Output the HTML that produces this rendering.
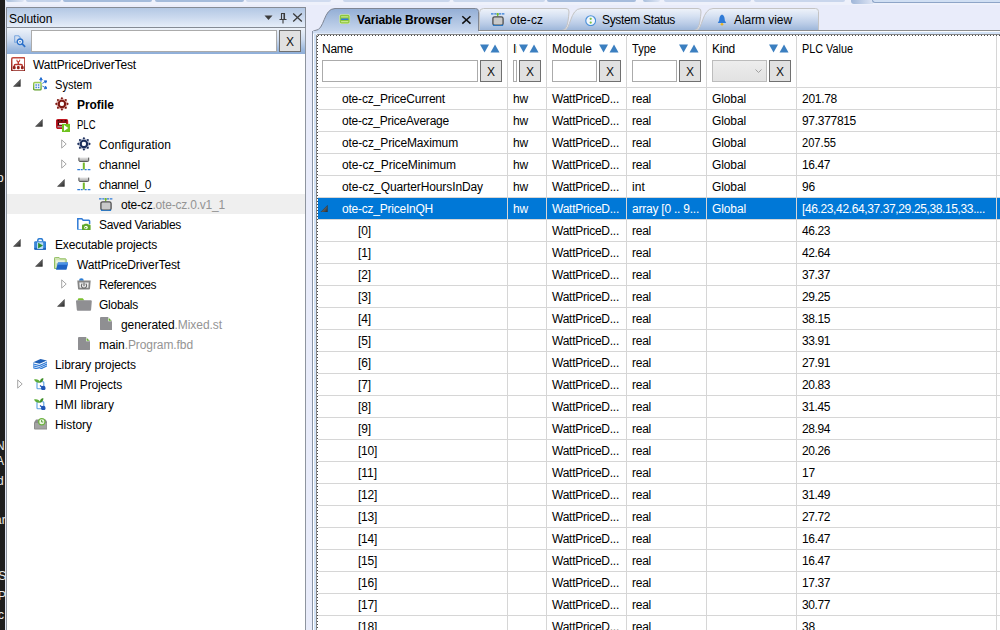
<!DOCTYPE html>
<html><head><meta charset="utf-8"><title>Variable Browser</title>
<style>
html,body{margin:0;padding:0;}
body{width:1000px;height:630px;overflow:hidden;position:relative;background:#e9ecfa;font-family:"Liberation Sans",sans-serif;font-size:12px;color:#111;}
.a{position:absolute;}
.t{position:absolute;white-space:nowrap;line-height:16px;height:16px;color:#000;}
.ic{position:absolute;display:block;line-height:0;font-style:normal;}
.b{font-weight:bold;}
.g{color:#949494;}
.w{color:#fff;}
.xb{position:absolute;box-sizing:border-box;border:1px solid #707070;background:#e1e1e1;text-align:center;font-size:12px;line-height:22px;color:#111;}
.inp{position:absolute;box-sizing:border-box;border:1px solid #ababab;background:#fff;}
.hl{position:absolute;height:1px;background:#d6d6d6;left:318px;width:682px;}
.vl{position:absolute;width:1px;background:#d6d6d6;top:36px;height:594px;}
</style></head><body>

<div class="a" style="left:0;top:0;width:1000px;height:5px;background:#eef1fb"></div>
<div class="a" style="left:6px;top:0;width:18px;height:2px;background:linear-gradient(90deg,#a9bfdc,#dfe6f5);border-radius:0 0 2px 2px"></div>
<div class="a" style="left:26px;top:0;width:35px;height:2px;background:#c3d2ea;border-radius:0 0 2px 2px"></div>
<div class="a" style="left:63px;top:0;width:89px;height:2px;background:#a4bbdb;border-radius:0 0 2px 2px"></div>
<div class="a" style="left:155px;top:0;width:89px;height:2px;background:#a4bbdb;border-radius:0 0 2px 2px"></div>
<div class="a" style="left:246px;top:0;width:85px;height:2px;background:#d0dbef;border-radius:0 0 2px 2px"></div>
<div class="a" style="left:343px;top:0;width:107px;height:2px;background:#c9d6ec;border-radius:0 0 2px 2px"></div>
<div class="a" style="left:453px;top:0;width:92px;height:2px;background:#cbd8ed;border-radius:0 0 2px 2px"></div>
<div class="a" style="left:547px;top:0;width:89px;height:2px;background:#a6bcdc;border-radius:0 0 2px 2px"></div>
<div class="a" style="left:643px;top:0;width:17px;height:2px;background:linear-gradient(90deg,#a9bfdc,#dfe6f5);border-radius:0 0 2px 2px"></div>
<div class="a" style="left:664px;top:0;width:87px;height:2px;background:#c9d6ec;border-radius:0 0 2px 2px"></div>
<div class="a" style="left:754px;top:0;width:91px;height:2px;background:#c9d6ec;border-radius:0 0 2px 2px"></div>
<div class="a" style="left:851px;top:0;width:22px;height:4px;background:linear-gradient(90deg,#9fb6d8,#dfe6f5);border-radius:0 0 0 3px"></div>
<div class="a" style="left:872px;top:0;width:128px;height:2px;background:#d0dff3;border-bottom:1px solid #8ea5c7;border-left:1px solid #8ea5c7;border-radius:0 0 0 3px"></div>
<div class="a" style="left:0;top:0;width:5px;height:630px;background:#1e1e1e;overflow:hidden">
<span class="t" style="left:-4px;top:438px;color:#e8e8e8">N</span>
<span class="t" style="left:-4px;top:453px;color:#e8e8e8">A</span>
<span class="t" style="left:-3px;top:473px;color:#e8e8e8">d</span>
<span class="t" style="left:-5px;top:512px;color:#e8e8e8">ar</span>
<span class="t" style="left:-5px;top:568px;color:#e8e8e8">IS</span>
<span class="t" style="left:-2px;top:588px;color:#e8e8e8">P</span>
<span class="t" style="left:-2px;top:607px;color:#e8e8e8">c</span>
<span class="t" style="left:-3px;top:170px;color:#e8e8e8">o</span>
</div>
<div class="a" style="left:5px;top:0;width:1px;height:630px;background:#e0e5f4"></div>
<div class="a" style="left:6px;top:7px;width:300px;height:623px;background:#fff;border-left:1px solid #8e959f;border-right:1px solid #8e959f;box-sizing:border-box"></div>
<div class="a" style="left:6px;top:7px;width:300px;height:21px;box-sizing:border-box;border:1px solid #858b95;background:linear-gradient(#b3c8e4,#cbd9ee 50%,#e6eef9)"></div>
<span class="t " id="t1" style="left:9px;top:11px;letter-spacing:0.016px;">Solution</span>
<i class="ic" style="left:264px;top:15px"><svg width="9" height="6" viewBox="0 0 9 6"><path d="M0.500 0.500h8L4.500 5z" fill="#3b3b3b"/></svg></i>
<i class="ic" style="left:279px;top:13px"><svg width="8" height="11" viewBox="0 0 8 11"><path d="M2 0.500h4M2.500 0.500v5.500M5.500 0.500v5.500M0.500 6.500h7M4 6.500v4" fill="none" stroke="#3b3b3b" stroke-width="1.100"/><path d="M4.500 0.500h1.500v6h-1.500z" fill="#3b3b3b"/></svg></i>
<i class="ic" style="left:292px;top:13px"><svg width="11" height="10" viewBox="0 0 11 10"><path d="M1.200 0.600l8.600 8M9.800 0.600l-8.600 8" stroke="#3b3b3b" stroke-width="1.300"/></svg></i>
<div class="a" style="left:7px;top:28px;width:298px;height:26px;background:linear-gradient(#eef3fa,#cddbef 45%,#9db9de 82%,#8eaed8)"></div>
<i class="ic" style="left:13.5px;top:35px"><svg width="12" height="12.8" viewBox="0 0 14 15" preserveAspectRatio="none"><path d="M0.800 1h4.500l2 2v3" fill="none" stroke="#7aa7de" stroke-width="1.200"/><path d="M0.800 1v7.500h2" fill="none" stroke="#7aa7de" stroke-width="1.200"/><circle cx="7" cy="8" r="3.300" fill="#eaf2fb" stroke="#2a6fc9" stroke-width="1.600"/><path d="M5.800 8h2.400" stroke="#2a6fc9" stroke-width="1"/><path d="M9.500 10.500l3.500 3.500" stroke="#2a6fc9" stroke-width="2"/></svg></i>
<div class="inp" style="left:31px;top:30px;width:246px;height:22px"></div>
<div class="xb" style="left:279px;top:30px;width:22px;height:22px">X</div>
<div class="a" style="left:7px;top:194px;width:298px;height:20px;background:#efefef"></div>
<i class="ic" style="left:10.6px;top:56.5px"><svg width="14.6" height="14.6" viewBox="0 0 15 15" preserveAspectRatio="none"><defs><linearGradient id="rg2" x1="0" y1="0" x2="0" y2="1"><stop offset="0" stop-color="#c24a3e"/><stop offset="1" stop-color="#8a1a13"/></linearGradient></defs><rect x="0.750" y="0.750" width="13.500" height="13.500" rx="1.200" fill="#fff" stroke="url(#rg2)" stroke-width="1.500"/><path d="M6.100 2.700v0.900a1.400 1.400 0 0 0 2.800 0v-0.900" fill="none" stroke="#c9453a" stroke-width="1.100"/><path d="M7.500 5v3.600M3.300 10.200V9.200a1.500 1.500 0 0 1 1.500 -1.500h5.400a1.500 1.500 0 0 1 1.500 1.500V10.200" fill="none" stroke="#b7342b" stroke-width="1.400"/><rect x="1.900" y="9.300" width="2.900" height="3.200" rx="1.200" fill="#96211a"/><rect x="6.050" y="9.300" width="2.900" height="3.200" rx="1.200" fill="#96211a"/><rect x="10.200" y="9.300" width="2.900" height="3.200" rx="1.200" fill="#96211a"/></svg></i>
<span class="t " id="t2" style="left:33px;top:57px;letter-spacing:-0.136px;">WattPriceDriverTest</span>
<i class="ic" style="left:13.3px;top:79.2px"><svg width="7.600" height="7.600" viewBox="0 0 7.600 7.600"><defs><linearGradient id="ag14_84" x1="0" y1="0" x2="1" y2="1"><stop offset="0.400" stop-color="#6a6a6a"/><stop offset="1" stop-color="#2a2a2a"/></linearGradient></defs><path d="M7.400 0.500V7.400H0.500z" fill="url(#ag14_84)" stroke="#2e2e2e" stroke-width="0.500"/></svg></i>
<i class="ic" style="left:32.7px;top:77px"><svg width="14.6" height="13.6" viewBox="0 0 15 14" preserveAspectRatio="none"><defs><linearGradient id="gg3" x1="0" y1="0" x2="0" y2="1"><stop offset="0" stop-color="#9ccc55"/><stop offset="1" stop-color="#5e9d28"/></linearGradient></defs><rect x="0.700" y="5.700" width="7.600" height="7.600" rx="1" fill="#f4f8ff" stroke="url(#gg3)" stroke-width="1.400"/><rect x="2.500" y="7.500" width="1.500" height="1.500" fill="#3f7fd6"/><rect x="5" y="7.500" width="1.500" height="1.500" fill="#3f7fd6"/><rect x="2.500" y="10" width="1.500" height="1.500" fill="#3f7fd6"/><rect x="5" y="10" width="1.500" height="1.500" fill="#3f7fd6"/><path d="M8.200 5V2.800M6.900 2.800L8.200 0.600L9.500 2.800z" stroke="#1f6ad0" stroke-width="1" fill="#1f6ad0"/><path d="M9.600 6.600L12.300 5M11.600 3.900L14.300 4L13 6.300z" stroke="#1f6ad0" stroke-width="0.900" fill="#1f6ad0"/><path d="M9.600 9.300L12.300 10.700M13 9.500L14.300 11.800L11.700 12.200z" stroke="#1f6ad0" stroke-width="0.900" fill="#1f6ad0"/></svg></i>
<span class="t " id="t3" style="left:55px;top:77px;transform:scaleX(0.9246);transform-origin:0 0;">System</span>
<i class="ic" style="left:55px;top:96.9px"><svg width="13.8" height="13.8" viewBox="0 0 14 14" preserveAspectRatio="none"><circle cx="7" cy="7" r="5.800" fill="#e0b4af"/><circle cx="7" cy="7" r="3.200" fill="none" stroke="#7e1a14" stroke-width="2.200"/><circle cx="7" cy="7" r="2.100" fill="#fff"/><circle cx="12.70" cy="7.00" r="1.050" fill="#7e1a14"/><circle cx="11.03" cy="11.03" r="1.050" fill="#7e1a14"/><circle cx="7.00" cy="12.70" r="1.050" fill="#7e1a14"/><circle cx="2.97" cy="11.03" r="1.050" fill="#7e1a14"/><circle cx="1.30" cy="7.00" r="1.050" fill="#7e1a14"/><circle cx="2.97" cy="2.97" r="1.050" fill="#7e1a14"/><circle cx="7.00" cy="1.30" r="1.050" fill="#7e1a14"/><circle cx="11.03" cy="2.97" r="1.050" fill="#7e1a14"/></svg></i>
<span class="t b" id="t4" style="left:77px;top:97px;letter-spacing:-0.049px;">Profile</span>
<i class="ic" style="left:35.3px;top:119.2px"><svg width="7.600" height="7.600" viewBox="0 0 7.600 7.600"><defs><linearGradient id="ag36_124" x1="0" y1="0" x2="1" y2="1"><stop offset="0.400" stop-color="#6a6a6a"/><stop offset="1" stop-color="#2a2a2a"/></linearGradient></defs><path d="M7.400 0.500V7.400H0.500z" fill="url(#ag36_124)" stroke="#2e2e2e" stroke-width="0.500"/></svg></i>
<i class="ic" style="left:56px;top:119.2px"><svg width="14.2" height="13" viewBox="0 0 14.2 13" preserveAspectRatio="none"><rect x="0.700" y="0.700" width="10.800" height="8.600" rx="1.200" fill="#8a1016" stroke="#bf1620" stroke-width="1.400"/><path d="M1.500 1.700h1.800M4.600 1.700h2M8.600 1.700h2" stroke="#1a0204" stroke-width="1"/><rect x="2" y="3.600" width="1.200" height="2.200" fill="#1a0204"/><rect x="3.100" y="4" width="7" height="1.700" fill="#fff"/><rect x="1.500" y="7.300" width="4.600" height="1" fill="#b9c3d0"/><rect x="6" y="4.900" width="8.200" height="8.100" fill="#6fc21f"/><path d="M8 6.100L12.300 9L8 11.900z" fill="#fff"/></svg></i>
<span class="t " id="t5" style="left:77px;top:117px;transform:scaleX(0.7925);transform-origin:0 0;">PLC</span>
<i class="ic" style="left:60.7px;top:138.7px"><svg width="6" height="10" viewBox="0 0 6 10"><path d="M0.700 0.900L5.200 5L0.700 9.100z" fill="#fff" stroke="#a6a6a6" stroke-width="1"/></svg></i>
<i class="ic" style="left:77px;top:136.9px"><svg width="13.8" height="13.8" viewBox="0 0 14 14" preserveAspectRatio="none"><circle cx="7" cy="7" r="5.800" fill="#b9c0d2"/><circle cx="7" cy="7" r="3.200" fill="none" stroke="#1c2f5c" stroke-width="2.200"/><circle cx="7" cy="7" r="2.100" fill="#fff"/><circle cx="12.70" cy="7.00" r="1.050" fill="#1c2f5c"/><circle cx="11.03" cy="11.03" r="1.050" fill="#1c2f5c"/><circle cx="7.00" cy="12.70" r="1.050" fill="#1c2f5c"/><circle cx="2.97" cy="11.03" r="1.050" fill="#1c2f5c"/><circle cx="1.30" cy="7.00" r="1.050" fill="#1c2f5c"/><circle cx="2.97" cy="2.97" r="1.050" fill="#1c2f5c"/><circle cx="7.00" cy="1.30" r="1.050" fill="#1c2f5c"/><circle cx="11.03" cy="2.97" r="1.050" fill="#1c2f5c"/></svg></i>
<span class="t " id="t6" style="left:99px;top:137px;letter-spacing:0.047px;">Configuration</span>
<i class="ic" style="left:60.7px;top:158.7px"><svg width="6" height="10" viewBox="0 0 6 10"><path d="M0.700 0.900L5.200 5L0.700 9.100z" fill="#fff" stroke="#a6a6a6" stroke-width="1"/></svg></i>
<i class="ic" style="left:77.2px;top:157.2px"><svg width="13.6" height="13.4" viewBox="0 0 13.6 13.4" preserveAspectRatio="none"><defs><linearGradient id="cg7" x1="0" y1="0" x2="0" y2="1"><stop offset="0" stop-color="#e6e6e6"/><stop offset="1" stop-color="#a6a6a6"/></linearGradient></defs><rect x="1.900" y="0.400" width="9.800" height="4" rx="0.900" fill="url(#cg7)"/><path d="M1.900 0.600V3.500a0.900 0.900 0 0 0 0.900 0.900h8a0.900 0.900 0 0 0 0.900 -0.900V0.600" fill="none" stroke="#4d4d4d" stroke-width="1"/><path d="M6.800 5.600v7" stroke="#76b82a" stroke-width="2"/><path d="M0.300 12.700h2.700M3.700 12.700h2M7.700 12.700h2M10.700 12.700h2.700" stroke="#2f7ad6" stroke-width="1.300"/></svg></i>
<span class="t " id="t7" style="left:99px;top:157px;letter-spacing:-0.150px;">channel</span>
<i class="ic" style="left:57.3px;top:179.2px"><svg width="7.600" height="7.600" viewBox="0 0 7.600 7.600"><defs><linearGradient id="ag58_184" x1="0" y1="0" x2="1" y2="1"><stop offset="0.400" stop-color="#6a6a6a"/><stop offset="1" stop-color="#2a2a2a"/></linearGradient></defs><path d="M7.400 0.500V7.400H0.500z" fill="url(#ag58_184)" stroke="#2e2e2e" stroke-width="0.500"/></svg></i>
<i class="ic" style="left:77.2px;top:177.2px"><svg width="13.6" height="13.4" viewBox="0 0 13.6 13.4" preserveAspectRatio="none"><defs><linearGradient id="cg8" x1="0" y1="0" x2="0" y2="1"><stop offset="0" stop-color="#e6e6e6"/><stop offset="1" stop-color="#a6a6a6"/></linearGradient></defs><rect x="1.900" y="0.400" width="9.800" height="4" rx="0.900" fill="url(#cg8)"/><path d="M1.900 0.600V3.500a0.900 0.900 0 0 0 0.900 0.900h8a0.900 0.900 0 0 0 0.900 -0.900V0.600" fill="none" stroke="#4d4d4d" stroke-width="1"/><path d="M6.800 5.600v7" stroke="#76b82a" stroke-width="2"/><path d="M0.300 12.700h2.700M3.700 12.700h2M7.700 12.700h2M10.700 12.700h2.700" stroke="#2f7ad6" stroke-width="1.300"/></svg></i>
<span class="t " id="t8" style="left:99px;top:177px;letter-spacing:-0.377px;">channel_0</span>
<i class="ic" style="left:99.3px;top:197.5px"><svg width="13.4" height="13.2" viewBox="0 0 13.4 13.2" preserveAspectRatio="none"><path d="M0 0.900h2.600M3.300 0.900h2.200M8 0.900h2.200M10.900 0.900h2.500" stroke="#2f7ad6" stroke-width="1.200"/><circle cx="6.700" cy="1.100" r="1.200" fill="#76b82a"/><path d="M6.700 1.500v2" stroke="#76b82a" stroke-width="1.200"/><rect x="1.900" y="3.800" width="10.200" height="8.400" rx="1.800" fill="#c9c9c9" stroke="#505050" stroke-width="1.300"/><path d="M2.300 11.600Q2.600 12.800 4 12.800H10Q11.400 12.800 11.700 11.600" fill="none" stroke="#1e78d0" stroke-width="1.300"/></svg></i>
<span class="t " id="t9" style="left:121px;top:197px;letter-spacing:-0.203px;">ote-cz<span class="g">.ote-cz.0.v1_1</span></span>
<i class="ic" style="left:77.4px;top:217.6px"><svg width="13.6" height="12.6" viewBox="0 0 13.6 12.6" preserveAspectRatio="none"><path d="M0.800 11V0.800H4.800l1.400 1.500H11.800a0.800 0.800 0 0 1 0.800 0.800V6" fill="none" stroke="#2f7ad6" stroke-width="1.500"/><path d="M0.800 11a1 1 0 0 0 1 1H5" fill="none" stroke="#5aa0e6" stroke-width="1.500"/><path d="M5 7.600a1 1 0 0 1 1 -1h1l0.800 -0.900h2.600l0.800 0.900h1.400a1 1 0 0 1 1 1v4a1 1 0 0 1 -1 1h-6.600a1 1 0 0 1 -1 -1z" fill="#5fa82a"/><circle cx="9" cy="9.500" r="1.800" fill="#fff"/><circle cx="8.700" cy="9.700" r="0.800" fill="#5fa82a"/></svg></i>
<span class="t " id="t10" style="left:99px;top:217px;letter-spacing:-0.300px;">Saved Variables</span>
<i class="ic" style="left:13.3px;top:239.2px"><svg width="7.600" height="7.600" viewBox="0 0 7.600 7.600"><defs><linearGradient id="ag14_244" x1="0" y1="0" x2="1" y2="1"><stop offset="0.400" stop-color="#6a6a6a"/><stop offset="1" stop-color="#2a2a2a"/></linearGradient></defs><path d="M7.400 0.500V7.400H0.500z" fill="url(#ag14_244)" stroke="#2e2e2e" stroke-width="0.500"/></svg></i>
<i class="ic" style="left:33.8px;top:237.7px"><svg width="12.4" height="12" viewBox="0 0 12.4 12" preserveAspectRatio="none"><path d="M3.800 3.600V2.300a1.600 1.600 0 0 1 1.600 -1.600h1.600a1.600 1.600 0 0 1 1.600 1.600V3.600" fill="none" stroke="#2b7cd3" stroke-width="1.500"/><rect x="0.200" y="3.300" width="12" height="8.500" rx="1.200" fill="#2b7cd3"/><rect x="0.200" y="9.800" width="12" height="2" rx="1" fill="#1c62b8"/><rect x="2.900" y="4.300" width="6.400" height="6.600" rx="0.800" fill="#b9dcf7"/><path d="M4.100 4.700v5.800l4.900-2.900z" fill="#2d8f2d"/><path d="M1.500 4.500v6M10.800 4.500v6" stroke="#5aa0e6" stroke-width="0.700" stroke-dasharray="1 1"/></svg></i>
<span class="t " id="t11" style="left:55px;top:237px;letter-spacing:-0.144px;">Executable projects</span>
<i class="ic" style="left:35.3px;top:259.2px"><svg width="7.600" height="7.600" viewBox="0 0 7.600 7.600"><defs><linearGradient id="ag36_264" x1="0" y1="0" x2="1" y2="1"><stop offset="0.400" stop-color="#6a6a6a"/><stop offset="1" stop-color="#2a2a2a"/></linearGradient></defs><path d="M7.400 0.500V7.400H0.500z" fill="url(#ag36_264)" stroke="#2e2e2e" stroke-width="0.500"/></svg></i>
<i class="ic" style="left:54px;top:257px"><svg width="14.4" height="12.8" viewBox="0 0 14.4 12.8" preserveAspectRatio="none"><path d="M0.500 11.500V1.200a0.800 0.800 0 0 1 0.800 -0.800h3.700l1.200 1.400h5.200a0.800 0.800 0 0 1 0.800 0.800V11.500z" fill="#cfe3b3" stroke="#86b850" stroke-width="0.900"/><path d="M2 3.300h8.600v3H2z" fill="#e8f2dc"/><path d="M4 5.500h10.400l-2 7.300h-10.400z" fill="#1f63c4"/><path d="M4 5.500h10.400l-0.600 2.200h-10.400z" fill="#4f94e6"/></svg></i>
<span class="t " id="t12" style="left:77px;top:257px;letter-spacing:-0.136px;">WattPriceDriverTest</span>
<i class="ic" style="left:60.7px;top:278.7px"><svg width="6" height="10" viewBox="0 0 6 10"><path d="M0.700 0.900L5.200 5L0.700 9.100z" fill="#fff" stroke="#a6a6a6" stroke-width="1"/></svg></i>
<i class="ic" style="left:77px;top:278px"><svg width="14" height="11.6" viewBox="0 0 14 11.6" preserveAspectRatio="none"><path d="M2 2.700a2.400 2.400 0 0 1 4.800 0z" fill="#2b7cd3"/><path d="M0.300 2.600h13.400l-0.700 8a1 1 0 0 1 -1 1h-10a1 1 0 0 1 -1 -1z" fill="#858585"/><path d="M2.300 4.500h9.400l-0.400 5.300h-8.600z" fill="#efefef"/><path d="M5.300 5.600a2.600 2.600 0 1 0 3.400 0" fill="none" stroke="#6b6b6b" stroke-width="1.100"/><path d="M7 4.600v3.600" stroke="#6b6b6b" stroke-width="1.200"/></svg></i>
<span class="t " id="t13" style="left:99px;top:277px;letter-spacing:-0.438px;">References</span>
<i class="ic" style="left:57.3px;top:299.2px"><svg width="7.600" height="7.600" viewBox="0 0 7.600 7.600"><defs><linearGradient id="ag58_304" x1="0" y1="0" x2="1" y2="1"><stop offset="0.400" stop-color="#6a6a6a"/><stop offset="1" stop-color="#2a2a2a"/></linearGradient></defs><path d="M7.400 0.500V7.400H0.500z" fill="url(#ag58_304)" stroke="#2e2e2e" stroke-width="0.500"/></svg></i>
<i class="ic" style="left:76px;top:297.8px"><svg width="15.8" height="12.8" viewBox="0 0 15.8 12.8" preserveAspectRatio="none"><path d="M1.800 2.500V1.500a1.300 1.300 0 0 1 1.300 -1.300h3.600l1.800 2.300z" fill="#7cc02f"/><path d="M0 3.200a1 1 0 0 1 1 -1h13.800a1 1 0 0 1 1 1l-0.700 8.600a1 1 0 0 1 -1 1h-12.300a1 1 0 0 1 -1 -1z" fill="#8f8f92"/></svg></i>
<span class="t " id="t14" style="left:99px;top:297px;letter-spacing:-0.241px;">Globals</span>
<i class="ic" style="left:99.6px;top:317.3px"><svg width="12.2" height="13.2" viewBox="0 0 12.2 13.2" preserveAspectRatio="none"><path d="M0 1a1 1 0 0 1 1 -1h7.200l4 4v8.200a1 1 0 0 1 -1 1h-10.200a1 1 0 0 1 -1 -1z" fill="#8f8f92"/><path d="M8 0l4.200 4.200h-4.200z" fill="#fff"/><path d="M8.600 1l2.800 2.800h-2.800z" fill="#5fae22"/></svg></i>
<span class="t " id="t15" style="left:121px;top:317px;letter-spacing:-0.059px;">generated<span class="g">.Mixed.st</span></span>
<i class="ic" style="left:77.8px;top:337.3px"><svg width="12.2" height="13.2" viewBox="0 0 12.2 13.2" preserveAspectRatio="none"><path d="M0 1a1 1 0 0 1 1 -1h7.200l4 4v8.200a1 1 0 0 1 -1 1h-10.200a1 1 0 0 1 -1 -1z" fill="#8f8f92"/><path d="M8 0l4.200 4.200h-4.200z" fill="#fff"/><path d="M8.600 1l2.800 2.800h-2.800z" fill="#5fae22"/></svg></i>
<span class="t " id="t16" style="left:99px;top:337px;letter-spacing:-0.087px;">main<span class="g">.Program.fbd</span></span>
<i class="ic" style="left:33px;top:358.8px"><svg width="13.8" height="10.4" viewBox="0 0 13.8 10.4" preserveAspectRatio="none"><path d="M0.300 3.200L7.500 0l6.300 1.400l-7.300 3.400z" fill="#1f5fb5"/><path d="M0.300 3.200v5.600l6.200 1.600l7.300-3.400V1.400" fill="none" stroke="#5a9be0" stroke-width="0.600"/><path d="M0.300 5L6.500 6.600L13.800 3.200M0.300 6.900L6.500 8.500L13.800 5.100M0.300 8.800L6.500 10.400L13.800 7" fill="none" stroke="#2f7ad6" stroke-width="1.150"/></svg></i>
<span class="t " id="t17" style="left:55px;top:357px;letter-spacing:-0.064px;">Library projects</span>
<i class="ic" style="left:16.7px;top:378.7px"><svg width="6" height="10" viewBox="0 0 6 10"><path d="M0.700 0.900L5.200 5L0.700 9.100z" fill="#fff" stroke="#a6a6a6" stroke-width="1"/></svg></i>
<i class="ic" style="left:34px;top:378px"><svg width="12" height="12.4" viewBox="0 0 12 12.4" preserveAspectRatio="none"><rect x="3" y="3.700" width="6.800" height="7" rx="0.800" fill="#fff" stroke="#5a9fe0" stroke-width="1.100"/><path d="M0 1.600C2.800 0.900 5.300 1.700 6.300 4.700C3.500 5.200 1.300 4.100 0 1.600z" fill="#5fae3a"/><path d="M6 4.700C5.500 2.200 7 0.500 9.300 0C9.700 2.300 8.300 4.200 6 4.700z" fill="#3f8f28"/><circle cx="9.300" cy="10" r="2.300" fill="#1f56b8"/><path d="M6 7.500l2.500 2" stroke="#1f56b8" stroke-width="1.300"/></svg></i>
<span class="t " id="t18" style="left:55px;top:377px;letter-spacing:-0.141px;">HMI Projects</span>
<i class="ic" style="left:34px;top:398px"><svg width="12" height="12.4" viewBox="0 0 12 12.4" preserveAspectRatio="none"><rect x="3" y="3.700" width="6.800" height="7" rx="0.800" fill="#fff" stroke="#5a9fe0" stroke-width="1.100"/><path d="M0 1.600C2.800 0.900 5.300 1.700 6.300 4.700C3.500 5.200 1.300 4.100 0 1.600z" fill="#5fae3a"/><path d="M6 4.700C5.500 2.200 7 0.500 9.300 0C9.700 2.300 8.300 4.200 6 4.700z" fill="#3f8f28"/><circle cx="9.300" cy="10" r="2.300" fill="#1f56b8"/><path d="M6 7.500l2.500 2" stroke="#1f56b8" stroke-width="1.300"/></svg></i>
<span class="t " id="t19" style="left:55px;top:397px;letter-spacing:0.089px;">HMI library</span>
<i class="ic" style="left:33.5px;top:418px"><svg width="13.6" height="11.6" viewBox="0 0 13.6 11.6" preserveAspectRatio="none"><path d="M0 4.500L2 1.500h9.600l2 3v6.100a1 1 0 0 1 -1 1h-11.600a1 1 0 0 1 -1 -1z" fill="#8c8c8c"/><path d="M1 5h3.500l0.800 1.600h3l0.800-1.600h3.500v5.600h-11.600z" fill="#a3a3a3"/><circle cx="7.800" cy="3.700" r="3.700" fill="#6cb33f"/><circle cx="7.800" cy="3.700" r="2.500" fill="#eef7e6"/><path d="M7.600 2v2h1.700" fill="none" stroke="#4e9a2f" stroke-width="0.900"/></svg></i>
<span class="t " id="t20" style="left:55px;top:417px;letter-spacing:-0.049px;">History</span>
<div class="a" style="left:306px;top:8px;width:6px;height:622px;background:#e9ecfa"></div>
<svg class="a" style="left:306px;top:6px" width="694" height="28" viewBox="306 6 694 28">
<defs>
<linearGradient id="ga" x1="0" y1="0" x2="0" y2="1"><stop offset="0" stop-color="#93aed5"/><stop offset="1" stop-color="#cddbf0"/></linearGradient>
<linearGradient id="gi" x1="0" y1="0" x2="0" y2="1"><stop offset="0" stop-color="#eff3fa"/><stop offset="0.350" stop-color="#d6e1f2"/><stop offset="0.700" stop-color="#b9cbe6"/><stop offset="1" stop-color="#9bb5d9"/></linearGradient>
</defs>
<path d="M696 30.500C702.500 30.500 702 8.500 713 8.500H815.500Q818.500 8.500 818.500 11.500V30.500z" fill="url(#gi)" stroke="#c4c4c4"/>
<path d="M564 30.500C570.500 30.500 570 8.500 581 8.500H698Q701.500 8.500 701 12C700 24 699 30.500 693 30.500z" fill="url(#gi)" stroke="#c4c4c4"/>
<path d="M479.500 30.500V12.500Q479.500 8.500 483.500 8.500H566Q569.500 8.500 569 12C568 24 567 30.500 561 30.500z" fill="url(#gi)" stroke="#c4c4c4"/>
<path d="M478 30.500H1000" stroke="#8c8c8c" stroke-width="1"/>
<path d="M312.500 34V33Q312.500 30.500 315 30.500C325 30.500 323 8.500 335 8.500H475.500Q478.500 8.500 478.500 11.500V34" fill="url(#ga)" stroke="#7f8694"/>
</svg>
<div class="a" style="left:312px;top:31px;width:688px;height:599px;background:#fff;border-left:1px solid #8a94a6;box-sizing:border-box"></div>
<div class="a" style="left:479px;top:31px;width:521px;height:1px;background:#fafcff"></div>
<div class="a" style="left:479px;top:32px;width:521px;height:2px;background:#d3e3f7"></div>
<div class="a" style="left:313px;top:31px;width:166px;height:2px;background:#cddbf0"></div>
<div class="a" style="left:314px;top:33px;width:2px;height:597px;background:#d3e3f7"></div>
<div class="a" style="left:313px;top:33px;width:166px;height:1px;background:#e2ecfa"></div>
<div class="a" style="left:316px;top:34px;width:700px;height:620px;border:1px solid #858585;border-radius:2px;box-sizing:border-box;background:#fff"></div>
<div class="a" style="left:318px;top:35px;width:682px;height:1px;background:repeating-linear-gradient(90deg,#4a4a4a 0,#4a4a4a 1.300px,rgba(255,255,255,0) 1.300px,rgba(255,255,255,0) 3px)"></div>
<div class="a" style="left:317px;top:36px;width:1px;height:594px;background:repeating-linear-gradient(180deg,#4a4a4a 0,#4a4a4a 1.300px,rgba(255,255,255,0) 1.300px,rgba(255,255,255,0) 3px)"></div>
<i class="ic" style="left:339.2px;top:14.4px"><svg width="11.4" height="10.2" viewBox="0 0 11.4 10.2" preserveAspectRatio="none"><rect x="0.300" y="0.300" width="10.800" height="9.600" rx="2" fill="#dcefb8"/><rect x="0.800" y="0.800" width="9.800" height="8.600" rx="1.600" fill="#8cc63f"/><rect x="2" y="2" width="7.400" height="1.400" rx="0.500" fill="#b9dd7d"/><rect x="2" y="4.600" width="7.400" height="1.400" rx="0.500" fill="#2f7ad6"/><rect x="2" y="7" width="7.400" height="1.300" rx="0.500" fill="#c9e58f"/></svg></i>
<span class="t b" id="t21" style="left:357px;top:12px;letter-spacing:-0.149px;">Variable Browser</span>
<i class="ic" style="left:461px;top:15px"><svg width="11" height="10" viewBox="0 0 11 10"><path d="M1.300 1.200l8.200 7.400M9.500 1.200l-8.200 7.400" stroke="#111" stroke-width="1.500"/></svg></i>
<i class="ic" style="left:491.3px;top:13.2px"><svg width="13.4" height="13.2" viewBox="0 0 13.4 13.2" preserveAspectRatio="none"><path d="M0 0.900h2.600M3.300 0.900h2.200M8 0.900h2.200M10.900 0.900h2.500" stroke="#2f7ad6" stroke-width="1.200"/><circle cx="6.700" cy="1.100" r="1.200" fill="#76b82a"/><path d="M6.700 1.500v2" stroke="#76b82a" stroke-width="1.200"/><rect x="1.900" y="3.800" width="10.200" height="8.400" rx="1.800" fill="#c9c9c9" stroke="#505050" stroke-width="1.300"/><path d="M2.300 11.600Q2.600 12.800 4 12.800H10Q11.400 12.800 11.700 11.600" fill="none" stroke="#1e78d0" stroke-width="1.300"/></svg></i>
<span class="t " id="t22" style="left:510px;top:12px;letter-spacing:0.052px;">ote-cz</span>
<i class="ic" style="left:584.8px;top:14.8px"><svg width="11.4" height="11.4" viewBox="0 0 13 13" preserveAspectRatio="none"><circle cx="6.500" cy="6.500" r="5.600" fill="#f2f7fd" stroke="#4a90d9" stroke-width="1.300"/><circle cx="6.500" cy="4.300" r="1.300" fill="#7ac143"/><circle cx="6.500" cy="8.700" r="1.300" fill="#7ac143"/></svg></i>
<span class="t " id="t23" style="left:602px;top:12px;letter-spacing:-0.337px;">System Status</span>
<i class="ic" style="left:717px;top:14.0px"><svg width="10" height="12" viewBox="0 0 10 12" preserveAspectRatio="none"><path d="M5 0.500C2.500 1.500 2.300 4 2.200 6.500L0.800 9h8.400L7.800 6.500C7.700 4 7.500 1.500 5 0.500z" fill="#2f7ad6"/><circle cx="5" cy="10.300" r="1.300" fill="#e6b422"/></svg></i>
<span class="t " id="t24" style="left:734px;top:12px;letter-spacing:-0.069px;">Alarm view</span>
<div class="vl" style="left:507px"></div>
<div class="vl" style="left:546px"></div>
<div class="vl" style="left:626px"></div>
<div class="vl" style="left:706px"></div>
<div class="vl" style="left:796px"></div>
<div class="vl" style="left:996px"></div>
<div class="hl" style="top:87px"></div>
<div class="hl" style="top:109px"></div>
<div class="hl" style="top:131px"></div>
<div class="hl" style="top:153px"></div>
<div class="hl" style="top:175px"></div>
<div class="hl" style="top:197px"></div>
<div class="hl" style="top:219px"></div>
<div class="hl" style="top:241px"></div>
<div class="hl" style="top:263px"></div>
<div class="hl" style="top:285px"></div>
<div class="hl" style="top:307px"></div>
<div class="hl" style="top:329px"></div>
<div class="hl" style="top:351px"></div>
<div class="hl" style="top:373px"></div>
<div class="hl" style="top:395px"></div>
<div class="hl" style="top:417px"></div>
<div class="hl" style="top:439px"></div>
<div class="hl" style="top:461px"></div>
<div class="hl" style="top:483px"></div>
<div class="hl" style="top:505px"></div>
<div class="hl" style="top:527px"></div>
<div class="hl" style="top:549px"></div>
<div class="hl" style="top:571px"></div>
<div class="hl" style="top:593px"></div>
<div class="hl" style="top:615px"></div>
<div class="hl" style="top:637px"></div>
<span class="t " id="t25" style="left:322px;top:41px;letter-spacing:-0.254px;">Name</span>
<div class="a" style="left:512px;top:40px;width:5px;height:18px;overflow:hidden"><span class="t " id="t26" style="left:1px;top:1px;">In</span></div>
<span class="t " id="t27" style="left:552px;top:41px;letter-spacing:0.107px;">Module</span>
<span class="t " id="t28" style="left:632px;top:41px;transform:scaleX(0.9225);transform-origin:0 0;">Type</span>
<span class="t " id="t29" style="left:712px;top:41px;letter-spacing:-0.258px;">Kind</span>
<span class="t " id="t30" style="left:802px;top:41px;transform:scaleX(0.9029);transform-origin:0 0;">PLC Value</span>
<i class="ic" style="left:480px;top:44px"><svg width="20" height="9" viewBox="0 0 20 9"><path d="M0 0.500h9L4.500 8.500z" fill="#3b7fc0"/><path d="M10.500 8.500h9L15 0.500z" fill="#3b7fc0"/></svg></i>
<i class="ic" style="left:518.5px;top:44px"><svg width="20" height="9" viewBox="0 0 20 9"><path d="M0 0.500h9L4.500 8.500z" fill="#3b7fc0"/><path d="M10.500 8.500h9L15 0.500z" fill="#3b7fc0"/></svg></i>
<i class="ic" style="left:598.5px;top:44px"><svg width="20" height="9" viewBox="0 0 20 9"><path d="M0 0.500h9L4.500 8.500z" fill="#3b7fc0"/><path d="M10.500 8.500h9L15 0.500z" fill="#3b7fc0"/></svg></i>
<i class="ic" style="left:678.5px;top:44px"><svg width="20" height="9" viewBox="0 0 20 9"><path d="M0 0.500h9L4.500 8.500z" fill="#3b7fc0"/><path d="M10.500 8.500h9L15 0.500z" fill="#3b7fc0"/></svg></i>
<i class="ic" style="left:768.5px;top:44px"><svg width="20" height="9" viewBox="0 0 20 9"><path d="M0 0.500h9L4.500 8.500z" fill="#3b7fc0"/><path d="M10.500 8.500h9L15 0.500z" fill="#3b7fc0"/></svg></i>
<div class="inp" style="left:322px;top:60px;width:156px;height:22px"></div>
<div class="xb" style="left:480px;top:60px;width:22px;height:22px">X</div>
<div class="inp" style="left:513px;top:60px;width:4px;height:22px"></div>
<div class="xb" style="left:519px;top:60px;width:22px;height:22px">X</div>
<div class="inp" style="left:552px;top:60px;width:45px;height:22px"></div>
<div class="xb" style="left:599px;top:60px;width:22px;height:22px">X</div>
<div class="inp" style="left:632px;top:60px;width:45px;height:22px"></div>
<div class="xb" style="left:679px;top:60px;width:22px;height:22px">X</div>
<div class="inp" style="left:712px;top:60px;width:55px;height:22px;background:linear-gradient(#ededed,#e2e2e2);border-color:#bcbcbc"></div>
<i class="ic" style="left:754.500px;top:68.500px"><svg width="7" height="4.500" viewBox="0 0 7 4.500"><path d="M0.500 0.500L3.500 3.500L6.500 0.500" fill="none" stroke="#a0a0a0" stroke-width="1"/></svg></i>
<div class="xb" style="left:769px;top:60px;width:22px;height:22px">X</div>
<div class="a" style="left:318px;top:198px;width:682px;height:21px;background:#0078d7"></div>
<div class="a" style="left:507px;top:198px;width:1px;height:21px;background:#d6d6d6"></div>
<div class="a" style="left:546px;top:198px;width:1px;height:21px;background:#d6d6d6"></div>
<div class="a" style="left:626px;top:198px;width:1px;height:21px;background:#d6d6d6"></div>
<div class="a" style="left:706px;top:198px;width:1px;height:21px;background:#d6d6d6"></div>
<div class="a" style="left:796px;top:198px;width:1px;height:21px;background:#d6d6d6"></div>
<div class="a" style="left:996px;top:198px;width:1px;height:21px;background:#d6d6d6"></div>
<i class="ic" style="left:320.0px;top:204.5px"><svg width="7.600" height="7.600" viewBox="0 0 7.600 7.600"><defs><linearGradient id="ag320.7_209.3" x1="0" y1="0" x2="1" y2="1"><stop offset="0.400" stop-color="#6a6a6a"/><stop offset="1" stop-color="#2a2a2a"/></linearGradient></defs><path d="M7.400 0.500V7.400H0.500z" fill="url(#ag320.7_209.3)" stroke="#2e2e2e" stroke-width="0.500"/></svg></i>
<span class="t " id="t31" style="left:342px;top:91px;letter-spacing:-0.196px;">ote-cz_PriceCurrent</span>
<span class="t " id="t32" style="left:513px;top:91px;letter-spacing:-0.172px;">hw</span>
<span class="t " id="t33" style="left:552px;top:91px;letter-spacing:-0.249px;">WattPriceD...</span>
<span class="t " id="t34" style="left:632px;top:91px;letter-spacing:-0.254px;">real</span>
<span class="t " id="t35" style="left:712px;top:91px;letter-spacing:-0.115px;">Global</span>
<span class="t " id="t36" style="left:802px;top:91px;letter-spacing:-0.284px;">201.78</span>
<span class="t " id="t37" style="left:342px;top:113px;letter-spacing:-0.220px;">ote-cz_PriceAverage</span>
<span class="t " id="t38" style="left:513px;top:113px;letter-spacing:-0.172px;">hw</span>
<span class="t " id="t39" style="left:552px;top:113px;letter-spacing:-0.249px;">WattPriceD...</span>
<span class="t " id="t40" style="left:632px;top:113px;letter-spacing:-0.254px;">real</span>
<span class="t " id="t41" style="left:712px;top:113px;letter-spacing:-0.115px;">Global</span>
<span class="t " id="t42" style="left:802px;top:113px;letter-spacing:-0.304px;">97.377815</span>
<span class="t " id="t43" style="left:342px;top:135px;letter-spacing:-0.142px;">ote-cz_PriceMaximum</span>
<span class="t " id="t44" style="left:513px;top:135px;letter-spacing:-0.172px;">hw</span>
<span class="t " id="t45" style="left:552px;top:135px;letter-spacing:-0.249px;">WattPriceD...</span>
<span class="t " id="t46" style="left:632px;top:135px;letter-spacing:-0.254px;">real</span>
<span class="t " id="t47" style="left:712px;top:135px;letter-spacing:-0.115px;">Global</span>
<span class="t " id="t48" style="left:802px;top:135px;transform:scaleX(0.9264);transform-origin:0 0;">207.55</span>
<span class="t " id="t49" style="left:342px;top:157px;letter-spacing:-0.072px;">ote-cz_PriceMinimum</span>
<span class="t " id="t50" style="left:513px;top:157px;letter-spacing:-0.172px;">hw</span>
<span class="t " id="t51" style="left:552px;top:157px;letter-spacing:-0.249px;">WattPriceD...</span>
<span class="t " id="t52" style="left:632px;top:157px;letter-spacing:-0.254px;">real</span>
<span class="t " id="t53" style="left:712px;top:157px;letter-spacing:-0.115px;">Global</span>
<span class="t " id="t54" style="left:802px;top:157px;letter-spacing:-0.406px;">16.47</span>
<span class="t " id="t55" style="left:342px;top:179px;letter-spacing:-0.100px;">ote-cz_QuarterHoursInDay</span>
<span class="t " id="t56" style="left:513px;top:179px;letter-spacing:-0.172px;">hw</span>
<span class="t " id="t57" style="left:552px;top:179px;letter-spacing:-0.249px;">WattPriceD...</span>
<span class="t " id="t58" style="left:632px;top:179px;letter-spacing:0.104px;">int</span>
<span class="t " id="t59" style="left:712px;top:179px;letter-spacing:-0.115px;">Global</span>
<span class="t " id="t60" style="left:802px;top:179px;letter-spacing:-0.180px;">96</span>
<span class="t w" id="t61" style="left:342px;top:201px;letter-spacing:-0.231px;">ote-cz_PriceInQH</span>
<span class="t w" id="t62" style="left:513px;top:201px;letter-spacing:-0.172px;">hw</span>
<span class="t w" id="t63" style="left:552px;top:201px;letter-spacing:-0.249px;">WattPriceD...</span>
<span class="t w" id="t64" style="left:632px;top:201px;letter-spacing:-0.231px;">array [0 .. 9...</span>
<span class="t w" id="t65" style="left:712px;top:201px;letter-spacing:-0.115px;">Global</span>
<span class="t w" id="t66" style="left:802px;top:201px;letter-spacing:-0.374px;">[46.23,42.64,37.37,29.25,38.15,33....</span>
<span class="t " id="t67" style="left:358px;top:223px;letter-spacing:-0.115px;">[0]</span>
<span class="t " id="t68" style="left:552px;top:223px;letter-spacing:-0.249px;">WattPriceD...</span>
<span class="t " id="t69" style="left:632px;top:223px;letter-spacing:-0.254px;">real</span>
<span class="t " id="t70" style="left:802px;top:223px;letter-spacing:-0.406px;">46.23</span>
<span class="t " id="t71" style="left:358px;top:245px;letter-spacing:-0.115px;">[1]</span>
<span class="t " id="t72" style="left:552px;top:245px;letter-spacing:-0.249px;">WattPriceD...</span>
<span class="t " id="t73" style="left:632px;top:245px;letter-spacing:-0.254px;">real</span>
<span class="t " id="t74" style="left:802px;top:245px;letter-spacing:-0.406px;">42.64</span>
<span class="t " id="t75" style="left:358px;top:267px;letter-spacing:-0.115px;">[2]</span>
<span class="t " id="t76" style="left:552px;top:267px;letter-spacing:-0.249px;">WattPriceD...</span>
<span class="t " id="t77" style="left:632px;top:267px;letter-spacing:-0.254px;">real</span>
<span class="t " id="t78" style="left:802px;top:267px;letter-spacing:-0.406px;">37.37</span>
<span class="t " id="t79" style="left:358px;top:289px;letter-spacing:-0.115px;">[3]</span>
<span class="t " id="t80" style="left:552px;top:289px;letter-spacing:-0.249px;">WattPriceD...</span>
<span class="t " id="t81" style="left:632px;top:289px;letter-spacing:-0.254px;">real</span>
<span class="t " id="t82" style="left:802px;top:289px;letter-spacing:-0.406px;">29.25</span>
<span class="t " id="t83" style="left:358px;top:311px;letter-spacing:-0.115px;">[4]</span>
<span class="t " id="t84" style="left:552px;top:311px;letter-spacing:-0.249px;">WattPriceD...</span>
<span class="t " id="t85" style="left:632px;top:311px;letter-spacing:-0.254px;">real</span>
<span class="t " id="t86" style="left:802px;top:311px;letter-spacing:-0.406px;">38.15</span>
<span class="t " id="t87" style="left:358px;top:333px;letter-spacing:-0.115px;">[5]</span>
<span class="t " id="t88" style="left:552px;top:333px;letter-spacing:-0.249px;">WattPriceD...</span>
<span class="t " id="t89" style="left:632px;top:333px;letter-spacing:-0.254px;">real</span>
<span class="t " id="t90" style="left:802px;top:333px;letter-spacing:-0.406px;">33.91</span>
<span class="t " id="t91" style="left:358px;top:355px;letter-spacing:-0.115px;">[6]</span>
<span class="t " id="t92" style="left:552px;top:355px;letter-spacing:-0.249px;">WattPriceD...</span>
<span class="t " id="t93" style="left:632px;top:355px;letter-spacing:-0.254px;">real</span>
<span class="t " id="t94" style="left:802px;top:355px;letter-spacing:-0.406px;">27.91</span>
<span class="t " id="t95" style="left:358px;top:377px;letter-spacing:-0.115px;">[7]</span>
<span class="t " id="t96" style="left:552px;top:377px;letter-spacing:-0.249px;">WattPriceD...</span>
<span class="t " id="t97" style="left:632px;top:377px;letter-spacing:-0.254px;">real</span>
<span class="t " id="t98" style="left:802px;top:377px;letter-spacing:-0.406px;">20.83</span>
<span class="t " id="t99" style="left:358px;top:399px;letter-spacing:-0.115px;">[8]</span>
<span class="t " id="t100" style="left:552px;top:399px;letter-spacing:-0.249px;">WattPriceD...</span>
<span class="t " id="t101" style="left:632px;top:399px;letter-spacing:-0.254px;">real</span>
<span class="t " id="t102" style="left:802px;top:399px;letter-spacing:-0.406px;">31.45</span>
<span class="t " id="t103" style="left:358px;top:421px;letter-spacing:-0.115px;">[9]</span>
<span class="t " id="t104" style="left:552px;top:421px;letter-spacing:-0.249px;">WattPriceD...</span>
<span class="t " id="t105" style="left:632px;top:421px;letter-spacing:-0.254px;">real</span>
<span class="t " id="t106" style="left:802px;top:421px;letter-spacing:-0.406px;">28.94</span>
<span class="t " id="t107" style="left:358px;top:443px;letter-spacing:-0.254px;">[10]</span>
<span class="t " id="t108" style="left:552px;top:443px;letter-spacing:-0.249px;">WattPriceD...</span>
<span class="t " id="t109" style="left:632px;top:443px;letter-spacing:-0.254px;">real</span>
<span class="t " id="t110" style="left:802px;top:443px;letter-spacing:-0.406px;">20.26</span>
<span class="t " id="t111" style="left:358px;top:465px;letter-spacing:-0.031px;">[11]</span>
<span class="t " id="t112" style="left:552px;top:465px;letter-spacing:-0.249px;">WattPriceD...</span>
<span class="t " id="t113" style="left:632px;top:465px;letter-spacing:-0.254px;">real</span>
<span class="t " id="t114" style="left:802px;top:465px;letter-spacing:-0.180px;">17</span>
<span class="t " id="t115" style="left:358px;top:487px;letter-spacing:-0.254px;">[12]</span>
<span class="t " id="t116" style="left:552px;top:487px;letter-spacing:-0.249px;">WattPriceD...</span>
<span class="t " id="t117" style="left:632px;top:487px;letter-spacing:-0.254px;">real</span>
<span class="t " id="t118" style="left:802px;top:487px;letter-spacing:-0.406px;">31.49</span>
<span class="t " id="t119" style="left:358px;top:509px;letter-spacing:-0.254px;">[13]</span>
<span class="t " id="t120" style="left:552px;top:509px;letter-spacing:-0.249px;">WattPriceD...</span>
<span class="t " id="t121" style="left:632px;top:509px;letter-spacing:-0.254px;">real</span>
<span class="t " id="t122" style="left:802px;top:509px;letter-spacing:-0.406px;">27.72</span>
<span class="t " id="t123" style="left:358px;top:531px;letter-spacing:-0.254px;">[14]</span>
<span class="t " id="t124" style="left:552px;top:531px;letter-spacing:-0.249px;">WattPriceD...</span>
<span class="t " id="t125" style="left:632px;top:531px;letter-spacing:-0.254px;">real</span>
<span class="t " id="t126" style="left:802px;top:531px;letter-spacing:-0.406px;">16.47</span>
<span class="t " id="t127" style="left:358px;top:553px;letter-spacing:-0.254px;">[15]</span>
<span class="t " id="t128" style="left:552px;top:553px;letter-spacing:-0.249px;">WattPriceD...</span>
<span class="t " id="t129" style="left:632px;top:553px;letter-spacing:-0.254px;">real</span>
<span class="t " id="t130" style="left:802px;top:553px;letter-spacing:-0.406px;">16.47</span>
<span class="t " id="t131" style="left:358px;top:575px;letter-spacing:-0.254px;">[16]</span>
<span class="t " id="t132" style="left:552px;top:575px;letter-spacing:-0.249px;">WattPriceD...</span>
<span class="t " id="t133" style="left:632px;top:575px;letter-spacing:-0.254px;">real</span>
<span class="t " id="t134" style="left:802px;top:575px;letter-spacing:-0.406px;">17.37</span>
<span class="t " id="t135" style="left:358px;top:597px;letter-spacing:-0.254px;">[17]</span>
<span class="t " id="t136" style="left:552px;top:597px;letter-spacing:-0.249px;">WattPriceD...</span>
<span class="t " id="t137" style="left:632px;top:597px;letter-spacing:-0.254px;">real</span>
<span class="t " id="t138" style="left:802px;top:597px;letter-spacing:-0.406px;">30.77</span>
<span class="t " id="t139" style="left:358px;top:619px;letter-spacing:-0.254px;">[18]</span>
<span class="t " id="t140" style="left:552px;top:619px;letter-spacing:-0.249px;">WattPriceD...</span>
<span class="t " id="t141" style="left:632px;top:619px;letter-spacing:-0.254px;">real</span>
<span class="t " id="t142" style="left:802px;top:619px;letter-spacing:-0.180px;">38</span>
</body></html>
